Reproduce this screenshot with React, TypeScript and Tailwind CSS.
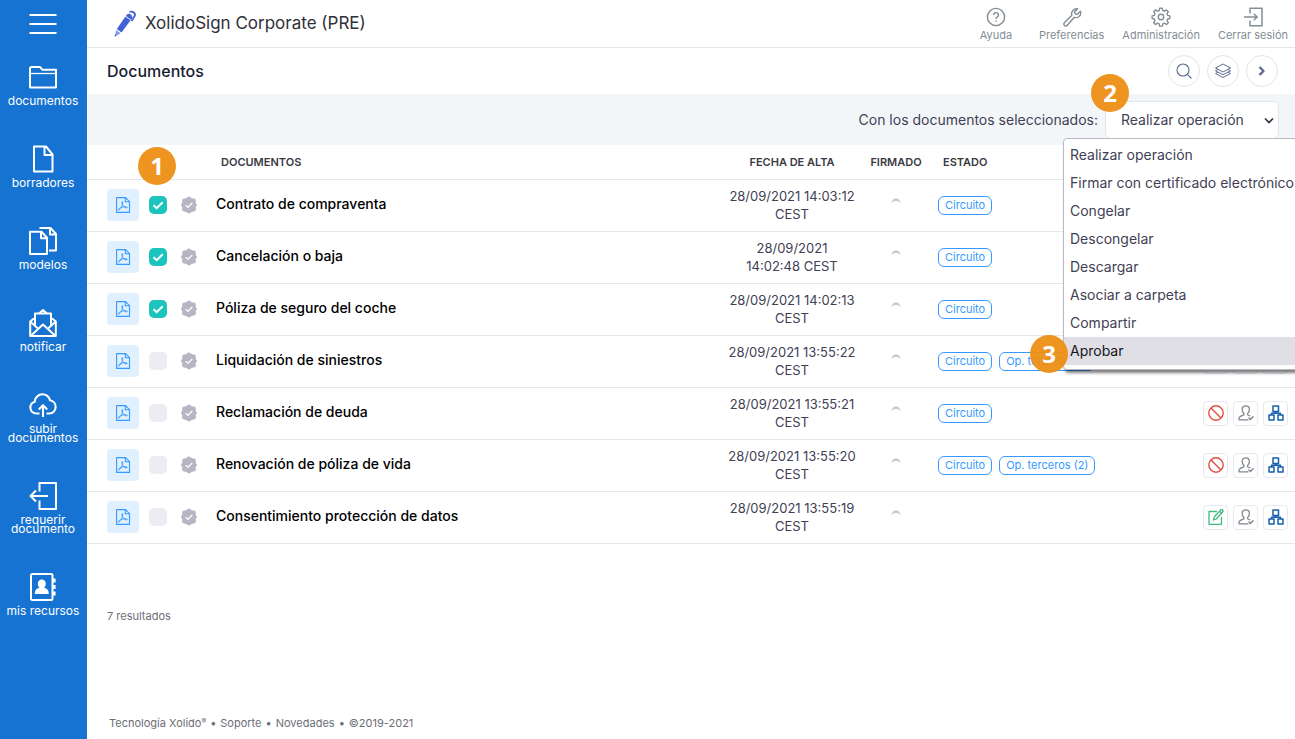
import type { ReactNode } from "react";
import clsx from "clsx";

const NAV = [
  { label: ["documentos"], icon: <FolderIcon /> },
  { label: ["borradores"], icon: <FileIcon /> },
  { label: ["modelos"], icon: <FilesIcon /> },
  { label: ["notificar"], icon: <MailIcon /> },
  { label: ["subir", "documentos"], icon: <CloudIcon /> },
  { label: ["requerir", "documento"], icon: <RequestIcon /> },
  { label: ["mis recursos"], icon: <ContactsIcon /> },
];

const TOP_LINKS = [
  { label: "Ayuda", icon: <HelpIcon /> },
  { label: "Preferencias", icon: <WrenchIcon /> },
  { label: "Administración", icon: <GearIcon /> },
  { label: "Cerrar sesión", icon: <LogoutIcon /> },
];

const OPERATIONS = [
  "Realizar operación",
  "Firmar con certificado electrónico",
  "Congelar",
  "Descongelar",
  "Descargar",
  "Asociar a carpeta",
  "Compartir",
  "Aprobar",
];

type Doc = {
  name: string;
  date: [string, string];
  checked?: boolean;
  tags: string[];
  action: "block" | "edit";
};

const DOCS: Doc[] = [
  { name: "Contrato de compraventa", date: ["28/09/2021 14:03:12", "CEST"], checked: true, tags: ["Circuito"], action: "block" },
  { name: "Cancelación o baja", date: ["28/09/2021", "14:02:48 CEST"], checked: true, tags: ["Circuito"], action: "block" },
  { name: "Póliza de seguro del coche", date: ["28/09/2021 14:02:13", "CEST"], checked: true, tags: ["Circuito"], action: "block" },
  { name: "Liquidación de siniestros", date: ["28/09/2021 13:55:22", "CEST"], tags: ["Circuito", "Op. terceros (2)"], action: "block" },
  { name: "Reclamación de deuda", date: ["28/09/2021 13:55:21", "CEST"], tags: ["Circuito"], action: "block" },
  { name: "Renovación de póliza de vida", date: ["28/09/2021 13:55:20", "CEST"], tags: ["Circuito", "Op. terceros (2)"], action: "block" },
  { name: "Consentimiento protección de datos", date: ["28/09/2021 13:55:19", "CEST"], tags: [], action: "edit" },
];

function Svg({ size, box, width = 1, children }: { size: string; box: number; width?: number; children: ReactNode }) {
  return (
    <svg
      className={clsx("shrink-0", size)}
      viewBox={`0 0 ${box} ${box}`}
      fill="none"
      stroke="currentColor"
      strokeWidth={width}
      strokeLinejoin="round"
      aria-hidden="true"
    >
      {children}
    </svg>
  );
}

/* sidebar icons, 28px */

function FolderIcon() {
  return (
    <Svg size="size-7" box={28} width={2}>
      <path d="M1 24V5.500q0-1.500 1.500-1.500H11l2.500 2.800H27V24q0 .5-.5.500h-25Q1 24.500 1 24Z" />
      <path d="M1 10.500h26" strokeWidth="1.300" />
    </Svg>
  );
}

function FileIcon() {
  return (
    <Svg size="size-7" box={28} width={2}>
      <path d="M5 1.500h12l6.500 8v17H5zM15.500 1.500V10h8" />
    </Svg>
  );
}

function FilesIcon() {
  return (
    <Svg size="size-7" box={28} width={2}>
      <path d="M1 4.800h11.500l5.500 6V27H1zM12 4.800v6.500h6" />
      <path d="M10.500 1h11l5.500 6v16.500h-7M21 1v6.500h6" />
    </Svg>
  );
}

function MailIcon() {
  return (
    <Svg size="size-7" box={28} width={2}>
      <path d="M6 8.500 1.200 12.500V27h25.600V12.500L22 8.500M10 4.500 14 1l4 3.500M6 17V4.500h16V17" />
      <path d="m1.200 12.500 8.300 7.500M26.800 12.500 18.500 20M1.500 27 14 15.500 26.500 27" />
    </Svg>
  );
}

function CloudIcon() {
  return (
    <Svg size="size-7" box={28} width={2.100}>
      <path d="M10.500 22.500H7.200a6 6 0 0 1-1.400-11.800A7.700 7.700 0 0 1 21 9.200a6.700 6.700 0 0 1-.5 13.300h-3" />
      <path d="M14 26V15M9.800 18.500l4.200-4.300 4.200 4.300" />
    </Svg>
  );
}

function RequestIcon() {
  return (
    <Svg size="size-7" box={28} width={2}>
      <path d="M10.500 9.500V1H27v26H10.500v-8.500M19 14H1.500M7 8.500 1.500 14 7 19.500" />
    </Svg>
  );
}

function ContactsIcon() {
  return (
    <Svg size="size-7" box={28} width={2}>
      <rect x="2" y="1" width="21.500" height="26" rx="1.500" />
      <path d="M25.200 5.500v4M25.200 12v4M25.200 18.500v4" strokeWidth="2.800" />
      <path
        d="M12.800 6.500a4 4 0 0 1 4 4.300c0 1.800-.8 3-1.700 3.900 2.800.7 4.700 2.200 4.700 6.300h-14c0-4.100 1.900-5.600 4.700-6.300-.9-.9-1.700-2.100-1.700-3.900a4 4 0 0 1 4-4.300Z"
        fill="currentColor"
        stroke="none"
      />
    </Svg>
  );
}

/* header icons, 20px */

function HelpIcon() {
  return (
    <Svg size="size-5" box={20} width={1.4}>
      <circle cx="10" cy="10" r="8.600" />
      <path d="M7.600 8a2.400 2.400 0 1 1 3.600 2.100c-.8.500-1.200.9-1.200 2M10 13.400v1.400" />
    </Svg>
  );
}

function WrenchIcon() {
  return (
    <Svg size="size-5" box={20} width={1.4}>
      <path d="M15.700 1.700 12.600 4.800l.5 2.100 2.100.5 3.200-3.100c.8 2.600-.2 4.700-1.900 5.700-1.400.8-2.800.8-4.200.3l-7 8c-.8.900-2.100.9-2.900.1-.8-.8-.8-2.100.1-2.900l7.400-7.200c-.6-1.500-.3-3.200.8-4.600 1.300-1.600 3.200-2.200 5-2Z" />
    </Svg>
  );
}

function GearIcon() {
  return (
    <Svg size="size-5" box={20} width={1.4}>
      <circle cx="10" cy="10" r="2.700" />
      <path d="M8.700 1.200h2.600l.5 2.300 1.700.7 2-1.300 1.800 1.800-1.300 2 .7 1.700 2.200.5v2.600l-2.200.5-.7 1.700 1.300 2-1.800 1.800-2-1.300-1.700.7-.5 2.200H8.700l-.5-2.200-1.700-.7-2 1.300-1.800-1.800 1.300-2-.7-1.700-2.200-.5V8.900l2.200-.5.700-1.700-1.300-2 1.800-1.800 2 1.300 1.700-.7z" />
    </Svg>
  );
}

function LogoutIcon() {
  return (
    <Svg size="size-5" box={20} width={1.5}>
      <path d="M7 6.500V1.200h12v17.600H7v-5.300M1 10h13M10.800 6.700 14.200 10l-3.400 3.300" />
    </Svg>
  );
}

/* round buttons */

function SearchIcon() {
  return (
    <Svg size="size-4" box={16} width={1.100}>
      <circle cx="7" cy="7" r="6" />
      <path d="m11.300 11.300 4.200 4.200" />
    </Svg>
  );
}

function LayersIcon() {
  return (
    <Svg size="size-4" box={16} width={1}>
      <path d="m8 1 7.500 4L8 9 .5 5zM3 6.400.5 7.800 8 11.700l7.500-3.900L13 6.400M3 9.100.5 10.500 8 14.500l7.500-4L13 9.100" />
    </Svg>
  );
}

function ChevronIcon() {
  return (
    <Svg size="size-4" box={16} width={2.4}>
      <path d="m5.500 4 4 4-4 4" />
    </Svg>
  );
}

/* row icons */

function PdfIcon() {
  return (
    <Svg size="size-4" box={16} width={1.100}>
      <path d="M1.600.6h9l3.900 4v10.800H1.600zM10.300.6v4.200h4.200" />
      <path d="M7 4.500c1.200 0 .8 2.300 0 4.300-.9 2.200-2.400 4.200-3.500 4.300-.8-.6.900-2.200 3-2.800 2.100-.7 5.300-.8 5.800 0 .3 1-2.100.8-3.300-.6C7.800 8.400 6.200 5.500 7 4.500Z" strokeWidth=".9" />
    </Svg>
  );
}

function SealIcon() {
  return (
    <Svg size="size-[18px]" box={18} width={1.200}>
      <path
        d="M9 .5c1.300 0 2 1.300 2.900 1.700.9.400 2.700 0 3.600 1.100.8 1.100.1 2.600.2 3.500.1.800 1.300 1.300 1.300 2.200s-1.200 1.400-1.300 2.200c-.1.900.6 2.400-.2 3.500-.9 1.100-2.700.7-3.600 1.100-.9.400-1.600 1.700-2.900 1.700s-2-1.300-2.900-1.700c-.9-.4-2.700 0-3.600-1.100-.8-1.100-.1-2.600-.2-3.500C2.200 10.400 1 9.900 1 9s1.200-1.400 1.300-2.200c.1-.9-.6-2.400.2-3.500.9-1.100 2.700-.7 3.600-1.100C7 1.800 7.700.5 9 .5Z"
        fill="#b5b5c3"
        stroke="none"
      />
      <path d="m5.700 9.300 2.200 2 4.400-4.300" stroke="#fff" />
    </Svg>
  );
}

function BlockIcon() {
  return (
    <Svg size="size-4" box={16} width={1.400}>
      <circle cx="8" cy="8" r="7.200" />
      <path d="m3 3 10 10" />
    </Svg>
  );
}

function EditIcon() {
  return (
    <Svg size="size-4" box={16} width={1.300}>
      <path d="M9 2.500H1v12.800h12.500V8" />
      <path d="m5.500 11 .8-3.200 6.500-6.900q.9-.8 1.800 0t.1 1.900l-6.200 7zM11.500 2.300l2 1.900" />
    </Svg>
  );
}

function UserCheckIcon() {
  return (
    <Svg size="size-4" box={16} width={1.300}>
      <path d="M10.500 14.800H1c-.3-3 .8-3.300 4.700-4.800.6-.3.500-1.200.1-1.700C4.700 7.200 4.200 6 4.200 4.500 4.200 2.200 5.500.8 7.800.8s3.600 1.400 3.600 3.700c0 1.500-.5 2.700-1.600 3.800-.4.500-.4 1.400.1 1.700l2.400 1" />
      <path d="m10.500 12.500 2 2 3-3.300" />
    </Svg>
  );
}

function TreeIcon() {
  return (
    <Svg size="size-4" box={16} width={1.500}>
      <path d="M5 1h5.500v5.500H5zM1 10h5v5H1zM10 10h5v5h-5zM7.800 6.500v1.800M3.500 10V8.300h9V10" />
    </Svg>
  );
}

function PenLogo() {
  return (
    <svg className="h-7 w-6 shrink-0" viewBox="0 0 24 28" fill="none" aria-hidden="true">
      <path d="M12.500 6.500 17.800 10 8.500 22.500 3.800 19z" fill="#4262d6" />
      <path d="M3.200 20 7.500 23.200 2 26.500z" fill="#7f95e6" />
      <path d="M2.300 24.200 3.500 25.400 1.400 26.800z" fill="#3857c8" />
      <path d="M13.200 5.400c1.200-1.800 2.900-2.200 4.600-1s1.900 3 .7 4.700l-.5.600-5.200-3.700z" fill="#4262d6" />
      <path d="M16.500 1.900c3.400-.9 6.300 1.100 5.200 4L18.500 11" stroke="#4262d6" strokeWidth="1.900" />
      <path d="m12.500 6.400 5.300 3.700" stroke="#fff" strokeWidth=".6" />
    </svg>
  );
}

function StepBadge({ n, className }: { n: number; className: string }) {
  return (
    <span
      className={clsx(
        "absolute z-30 flex size-[38px] items-center justify-center rounded-full bg-[#ec8e15]/95 font-['Open_Sans',sans-serif] text-2xl font-bold text-white",
        className,
      )}
    >
      {n}
    </span>
  );
}

function Sidebar() {
  return (
    <aside className="w-[87px] shrink-0 bg-[#1773d2] pr-px text-white">
      <button type="button" aria-label="Menú" className="flex h-12 w-full items-center justify-center">
        <Svg size="size-7" box={28} width={2}>
          <path d="M.5 5h27M.5 14h27M.5 23h27" />
        </Svg>
      </button>
      <nav className="flex flex-col gap-10 pt-[15px]">
        {NAV.map((item) => (
          <a key={item.label.join(" ")} href="#" className="flex flex-col items-center gap-[5px] text-center text-xs leading-[9px]">
            {item.icon}
            <span>
              {item.label.map((line) => (
                <span key={line} className="block whitespace-nowrap">
                  {line}
                </span>
              ))}
            </span>
          </a>
        ))}
      </nav>
    </aside>
  );
}

function TopBar() {
  return (
    <header className="flex h-12 items-center justify-between border-b border-[#e4e6ea] pr-[7px] pl-[26px]">
      <div className="flex items-center gap-2 text-[17px] text-[#2f3038]">
        <PenLogo />
        <span>XolidoSign Corporate (PRE)</span>
      </div>
      <nav className="flex gap-[18px] pt-0.5 text-[11px] leading-4 text-[#848d94]">
        {TOP_LINKS.map((l) => (
          <a key={l.label} href="#" className="flex min-w-[50px] flex-col items-center">
            {l.icon}
            {l.label}
          </a>
        ))}
      </nav>
    </header>
  );
}

function RoundButton({ label, children }: { label: string; children: ReactNode }) {
  return (
    <button
      type="button"
      aria-label={label}
      className="flex size-8 items-center justify-center rounded-full border border-[#e4e3f0] bg-white text-[#5d6b92]"
    >
      {children}
    </button>
  );
}

function OperationSelect() {
  return (
    <div className="relative">
      <select
        id="operation"
        className="block h-[38px] w-[174px] appearance-none rounded-md border border-[#e4e6ef] bg-white pl-[15px] text-sm text-[#3f4254]"
      >
        {OPERATIONS.map((o) => (
          <option key={o}>{o}</option>
        ))}
      </select>
      <svg className="pointer-events-none absolute top-4 right-[5px] h-2 w-[10px]" viewBox="0 0 10 8" fill="none" aria-hidden="true">
        <path d="m1 1.500 4 4 4-4" stroke="#33343f" strokeWidth="1.700" />
      </svg>
      <ul
        role="listbox"
        aria-label="Operaciones"
        className="absolute top-full -left-[42px] z-20 -mt-px w-[260px] rounded-sm border border-[#b9b9c3] bg-white pt-0.5 pb-1 text-sm leading-7 text-[#3f4254] shadow-[2px_3px_3px_rgba(0,0,0,0.5)]"
      >
        {OPERATIONS.map((o) => {
          const active = o === "Aprobar";
          return (
            <li key={o} role="option" aria-selected={active} className={clsx("pl-1.5 whitespace-nowrap", active && "bg-[#e0dfe6] text-[#16161c]")}>
              {o}
            </li>
          );
        })}
        <li role="presentation">
          <StepBadge n={3} className="-bottom-1 -left-[34px]" />
        </li>
      </ul>
      <StepBadge n={2} className="-top-[27px] -left-[14px]" />
    </div>
  );
}

function ActionButton({ label, className, children }: { label: string; className: string; children: ReactNode }) {
  return (
    <button
      type="button"
      aria-label={label}
      className={clsx("flex size-[25px] items-center justify-center rounded-sm border border-[#e6e9ee] bg-white", className)}
    >
      {children}
    </button>
  );
}

function DocRow({ doc }: { doc: Doc }) {
  return (
    <tr className="h-[52px] border-b border-[#e6e7ea]">
      <td className="pl-5">
        <div className="flex items-center">
          <a href="#" aria-label={`PDF ${doc.name}`} className="mr-[10px] flex size-8 items-center justify-center rounded bg-[#e1f0ff] text-[#3699ff]">
            <PdfIcon />
          </a>
          <span className="relative mr-[13px] flex size-[18px]">
            <input
              type="checkbox"
              aria-label={doc.name}
              defaultChecked={doc.checked}
              className="peer size-[18px] appearance-none rounded-[5px] bg-[#ebedf3] checked:bg-[#1bc5bd]"
            />
            <svg className="pointer-events-none absolute inset-0 hidden peer-checked:block" viewBox="0 0 18 18" fill="none" aria-hidden="true">
              <path d="m4.500 9.200 3.200 3 6-6" stroke="#fff" strokeWidth="2" />
            </svg>
          </span>
          <SealIcon />
        </div>
      </td>
      <td className="pb-0.5 text-sm font-medium text-black">{doc.name}</td>
      <td className="text-center text-[13px] leading-[18px] whitespace-nowrap text-[#3f4254]">
        {doc.date[0]}
        <br />
        {doc.date[1]}
      </td>
      <td>
        <svg className="mx-auto mb-1.5 size-[10px]" viewBox="0 0 10 10" aria-hidden="true">
          <path d="M.5 6.500C.5 3.500 2.300 1.500 5 1.500s4.500 2 4.500 5C8.500 4.700 7 3.800 5 3.800S1.500 4.700.5 6.500Z" fill="#c6c6ca" />
        </svg>
      </td>
      <td className="pl-0.5">
        <div className="flex gap-[7px]">
          {doc.tags.map((t) => (
            <span key={t} className="rounded-md border border-[#3699ff] px-1.5 text-[11px] leading-[17px] whitespace-nowrap text-[#3699ff]">
              {t}
            </span>
          ))}
        </div>
      </td>
      <td className="pr-[7px]">
        <div className="flex justify-end gap-[5px]">
          {doc.action === "block" ? (
            <ActionButton label="Anular" className="text-[#e2503f]">
              <BlockIcon />
            </ActionButton>
          ) : (
            <ActionButton label="Editar" className="text-[#3dbb7f]">
              <EditIcon />
            </ActionButton>
          )}
          <ActionButton label="Firmantes" className="text-[#808890]">
            <UserCheckIcon />
          </ActionButton>
          <ActionButton label="Circuito" className="text-[#1660b0]">
            <TreeIcon />
          </ActionButton>
        </div>
      </td>
    </tr>
  );
}

export default function App() {
  return (
    <div className="flex min-h-screen overflow-hidden bg-white font-[Inter,sans-serif]">
      <Sidebar />
      <div className="flex min-w-0 flex-1 flex-col">
        <TopBar />
        <div className="flex h-[46px] items-center justify-between pr-[17px] pl-5">
          <h1 className="text-base font-medium text-[#181c32]">Documentos</h1>
          <div className="flex gap-[7px]">
            <RoundButton label="Buscar">
              <SearchIcon />
            </RoundButton>
            <RoundButton label="Capas">
              <LayersIcon />
            </RoundButton>
            <RoundButton label="Siguiente">
              <ChevronIcon />
            </RoundButton>
          </div>
        </div>
        <div className="flex h-[51px] items-center justify-end gap-[7px] bg-[#f3f6f9] pr-4">
          <label htmlFor="operation" className="text-sm text-[#3f4254]">
            Con los documentos seleccionados:
          </label>
          <OperationSelect />
        </div>

        <table className="w-full table-fixed border-collapse">
          <colgroup>
            <col className="w-[129px]" />
            <col />
            <col className="w-[128px]" />
            <col className="w-[80px]" />
            <col className="w-[257px]" />
            <col className="w-[102px]" />
          </colgroup>
          <thead>
            <tr className="h-[34px] border-b border-[#e6e7ea] text-[11px] text-[#3a3a42]">
              <th className="relative">
                <StepBadge n={1} className="top-0.5 left-[51px]" />
              </th>
              <th className="pl-[5px] text-left font-semibold">DOCUMENTOS</th>
              <th className="text-center font-semibold">FECHA DE ALTA</th>
              <th className="text-center font-semibold">FIRMADO</th>
              <th className="pl-[7px] text-left font-semibold">ESTADO</th>
              <th />
            </tr>
          </thead>
          <tbody>
            {DOCS.map((d) => (
              <DocRow key={d.name} doc={d} />
            ))}
          </tbody>
        </table>

        <p className="mt-16 pl-5 text-[11px] leading-4 text-[#6c6e76]">7 resultados</p>

        <footer className="mt-auto flex gap-1 pb-2 pl-[22px] text-[11px] leading-4 text-[#6c6e76]">
          <a href="#">
            Tecnología Xolido<sup className="text-[7px]">®</sup>
          </a>
          <span>•</span>
          <a href="#">Soporte</a>
          <span>•</span>
          <a href="#">Novedades</a>
          <span>•</span>
          <span>©2019-2021</span>
        </footer>
      </div>
    </div>
  );
}
